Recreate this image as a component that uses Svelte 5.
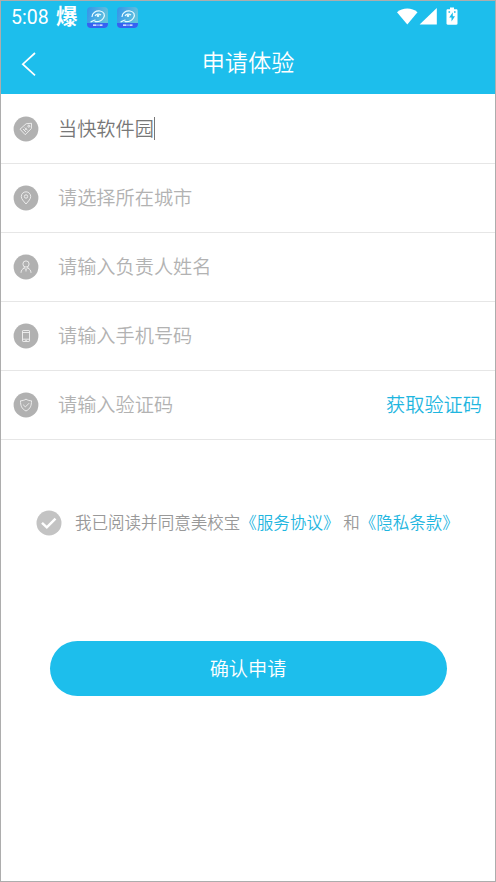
<script lang="ts">
  type Field = {
    icon: string;
    placeholder: string;
    value?: string;
    action?: string;
  };

  const fields: Field[] = [
    { icon: "tag", placeholder: "请输入学校名称", value: "当快软件园" },
    { icon: "pin", placeholder: "请选择所在城市" },
    { icon: "person", placeholder: "请输入负责人姓名" },
    { icon: "phone", placeholder: "请输入手机号码" },
    { icon: "shield", placeholder: "请输入验证码", action: "获取验证码" },
  ];
</script>

{#snippet appIcon(id: string)}
  <svg class="app" width="21" height="21" viewBox="0 0 21 21">
    <defs>
      <linearGradient {id} x1="0" y1="0" x2="1" y2="0.3">
        <stop offset="0" stop-color="#3394ea" />
        <stop offset="1" stop-color="#62c2dd" />
      </linearGradient>
    </defs>
    <rect width="21" height="21" rx="4" fill="url(#{id})" />
    <path d="M0 16h21v1a4 4 0 0 1-4 4H4a4 4 0 0 1-4-4z" fill="#3562f2" />
    <path
      d="M5 10C5 6 9 3.500 13 4c4 .5 5.500 4 3.500 7-2 3-6 4-9 3.500M8 9c1-2 4-2.500 6-1M3.500 15c2-.5 3-2 5-2"
      fill="none"
      stroke="#e8fbff"
      stroke-width="1.2"
    />
    <circle cx="11" cy="8.800" r="1.300" fill="#e8fbff" />
    <path d="M6 18.200h3.500M10.500 18.200h1M12.500 18.200h3" stroke="#fff" stroke-width="1.2" />
  </svg>
{/snippet}

<div class="screen">
  <header>
    <div class="status">
      <span class="time">5:08</span>
      <span class="burst">爆</span>
      {@render appIcon("app-a")}
      {@render appIcon("app-b")}
      <svg class="system" width="62" height="20" viewBox="0 0 62 20">
        <path d="M0 5.200C5.500.2 15 .2 20.500 5.200L10.300 17.500z" fill="#fff" />
        <path d="M39.800 1v16.500H22.600z" fill="#fff" />
        <path
          d="M53 .5h4v1.800h2.300c.8 0 1.200.5 1.200 1.200v13c0 .8-.5 1.200-1.200 1.200h-8.600c-.7 0-1.200-.5-1.200-1.200v-13c0-.7.5-1.200 1.200-1.200H53z"
          fill="#fff"
        />
        <path d="M55.800 5.200l-3.600 5.200h2.300v4.200l3.500-5.400h-2.200z" fill="#1dbeec" />
        <path d="M51.500 4.300h1.600v1.400h-1.600zM57 4.300h1.600v1.400H57z" fill="#1dbeec" />
      </svg>
    </div>
    <div class="nav">
      <svg class="back" width="16" height="26" viewBox="0 0 16 26">
        <path d="M14 2L1.800 13.200 14 24.400" fill="none" stroke="#fff" stroke-width="1.7" />
      </svg>
      <h1>申请体验</h1>
    </div>
  </header>

  <form>
    {#each fields as field}
      <div class="row">
        <svg class="icon" width="26" height="26" viewBox="0 0 26 26">
          <circle class="disc" cx="13" cy="13" r="12.400" />
          {#if field.icon === "tag"}
            <path d="M7 13.200l6.200-5.500 5.300-.4-.1 5.200-6.200 6.200z" />
            <circle cx="15.800" cy="10.200" r="1" />
            <path d="M10 13l3 3M11.700 11.500l3 3M11.200 14.500l2.500-2.400" />
          {:else if field.icon === "pin"}
            <path d="M13 19c-2.600-3-4.700-5.100-4.700-7.500a4.700 4.700 0 0 1 9.400 0c0 2.400-2.100 4.500-4.700 7.500z" />
            <circle cx="13" cy="11.500" r="1.700" />
          {:else if field.icon === "person"}
            <circle cx="13" cy="10" r="3.100" />
            <path d="M11.200 12.700v1.500c-2 .7-3 2-3.200 4.600M14.800 12.700v1.500c2 .7 3 2 3.200 4.600M11.400 14.200l1.600 1.300 1.600-1.300M13 15.500v2" />
          {:else if field.icon === "phone"}
            <rect x="9.500" y="7.500" width="7" height="11" rx="0.6" />
            <path d="M9.500 9.500h7M9.500 16.200h7M12.300 17.500h1.500" />
          {:else}
            <path d="M13 7.100c1.800 1.300 3.500 1.600 5.500 1.700 0 4.700-1 8-5.500 10.200-4.500-2.200-5.500-5.500-5.500-10.200 2-.1 3.700-.4 5.500-1.700z" />
            <path d="M10.200 12.800l2.200 2.100 3.700-3.700" />
          {/if}
        </svg>
        {#if field.value}
          <span class="value">{field.value}</span><span class="caret"></span>
        {:else}
          <input type="text" placeholder={field.placeholder} />
        {/if}
        {#if field.action}
          <button type="button" class="code">{field.action}</button>
        {/if}
      </div>
    {/each}

    <div class="agree">
      <svg width="26" height="26" viewBox="0 0 26 26">
        <circle cx="13" cy="13" r="12.500" fill="#c3c3c3" />
        <path class="check" d="M6 12.800l4.800 4.500 8.700-8.600" />
      </svg>
      <p>我已阅读并同意美校宝<span class="link">《服务协议》</span> 和<span class="link">《隐私条款》</span></p>
    </div>

    <button type="button" class="submit">确认申请</button>
  </form>
</div>

<style>
  :global(body) {
    margin: 0;
    background: #fff;
  }
  .screen {
    box-sizing: border-box;
    width: 496px;
    height: 882px;
    border: 1px solid #adadad;
    background: #fff;
    overflow: hidden;
    font-family: "Noto Sans CJK SC", sans-serif;
    font-weight: 350;
  }
  header {
    height: 93px;
    background: #1dbeec;
    color: #fff;
  }
  .status {
    display: flex;
    align-items: center;
    height: 32px;
    padding: 0 36px 0 10px;
  }
  .time {
    width: 45px;
    font-family: Roboto, sans-serif;
    font-size: 19.5px;
    font-weight: 400;
  }
  .burst {
    margin-right: 9px;
    padding-bottom: 4px;
    font-size: 21.5px;
    line-height: 28px;
    font-weight: 700;
  }
  .app {
    margin-right: 9px;
  }
  .system {
    margin-left: auto;
  }
  .nav {
    display: grid;
    grid-template-columns: 60px 1fr 60px;
    align-items: center;
    height: 61px;
  }
  .back {
    margin-left: 20px;
  }
  h1 {
    margin: 0;
    padding-bottom: 5px;
    font-size: 23.2px;
    line-height: 54px;
    font-weight: 350;
    text-align: center;
  }
  .row {
    display: flex;
    align-items: center;
    box-sizing: border-box;
    height: 69px;
    padding: 0 13px 0 12px;
    border-bottom: 1px solid #e6e6e6;
    font-size: 19.2px;
  }
  .row:first-child {
    height: 70px;
  }
  .icon {
    flex: none;
    margin-right: 19px;
    fill: none;
    stroke: #f2f2f2;
    stroke-width: 0.9;
  }
  .disc {
    fill: #b1b1b1;
    stroke: none;
  }
  .value {
    padding-bottom: 2px;
    color: #777;
  }
  .caret {
    width: 1px;
    height: 23px;
    background: #777;
  }
  input {
    flex: 1;
    min-width: 0;
    padding: 0 0 2px;
    border: 0;
    outline: 0;
    background: none;
    font: inherit;
    color: #777;
  }
  input::placeholder {
    color: #b2b2b2;
    opacity: 1;
  }
  button {
    padding: 0;
    border: 0;
    font: inherit;
  }
  .code {
    padding-bottom: 3px;
    background: none;
    color: #1fb6df;
  }
  .agree {
    display: flex;
    align-items: center;
    margin: 70px 0 0 35px;
  }
  .check {
    fill: none;
    stroke: #fff;
    stroke-width: 2.5;
  }
  p {
    margin: 0 0 0 13px;
    padding-bottom: 2px;
    font-size: 16.55px;
    line-height: 24px;
    color: #999;
    white-space: nowrap;
  }
  .link {
    color: #1fb6df;
  }
  .submit {
    display: block;
    width: 397px;
    height: 55px;
    margin: 105px 0 0 48.5px;
    padding-bottom: 2px;
    border-radius: 28px;
    background: #1dbeec;
    color: #fff;
    font-size: 19.2px;
  }
</style>
